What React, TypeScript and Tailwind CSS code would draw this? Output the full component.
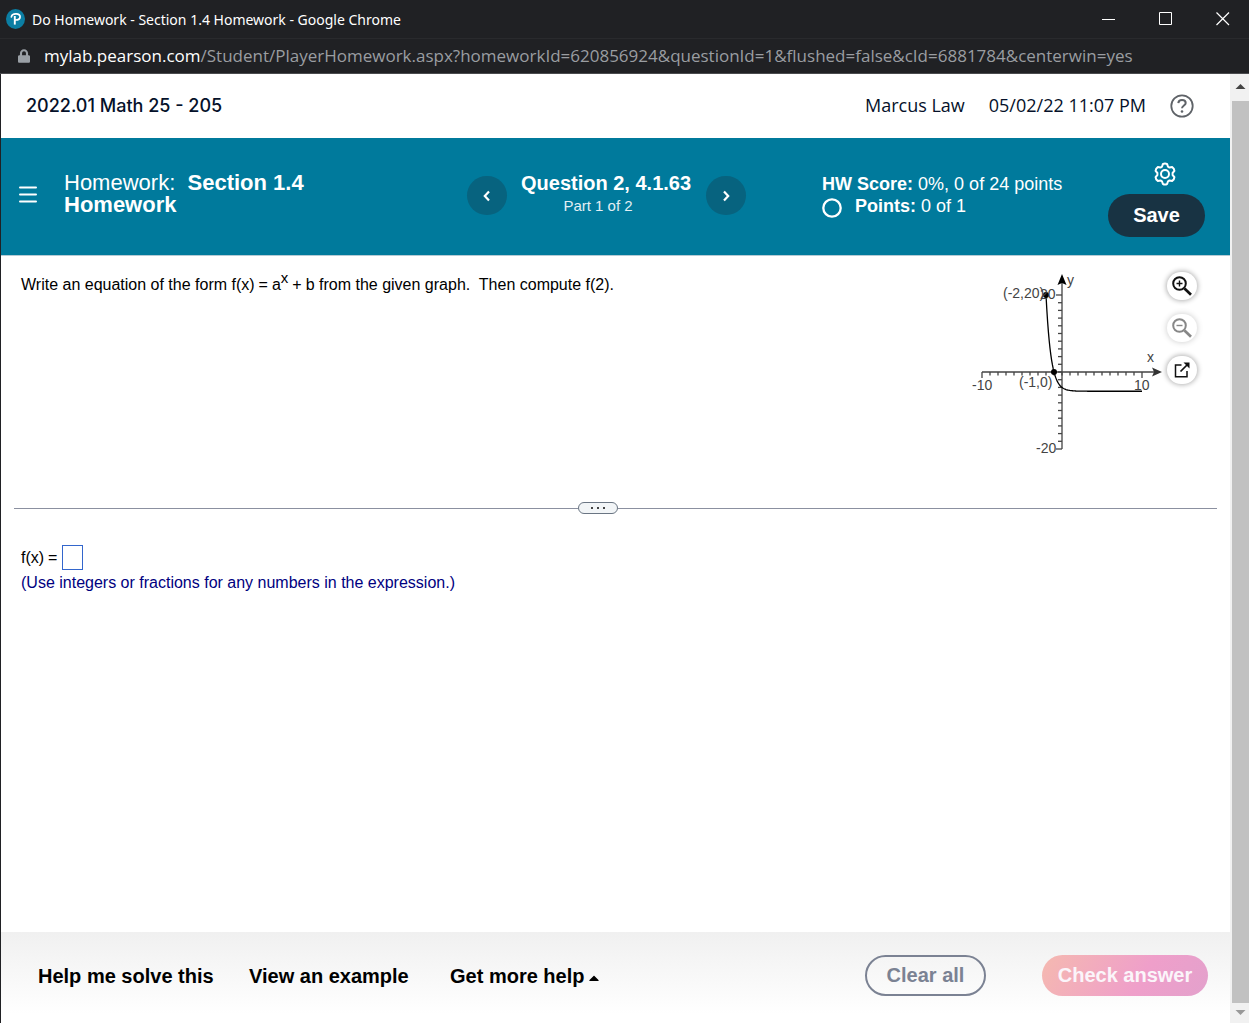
import { FaCaretUp, FaLock } from "react-icons/fa"

const TitleBar = () => {
  return (
    <header className="bg-[#202124] border-b border-[#4a4b4e]">
      <div className="h-[38px] flex items-center justify-between pl-[6px] pr-[19px]">
        <div className="flex items-center gap-[7px]">
          <svg className="w-[19px] h-[20px]" viewBox="0 0 19 20" aria-hidden="true">
            <ellipse cx="9.5" cy="10" rx="9.5" ry="10" fill="#0b7ea3" />
            <path d="M5.400 7.800C5.800 5.700 7.900 4.700 10.200 4.800c2.500.1 4 1.300 3.900 3.100-.1 1.900-1.900 3.100-4.600 3.100" fill="none" stroke="#fff" strokeWidth="1.700" strokeLinecap="round" />
            <path d="M8.800 7v8.600" stroke="#fff" strokeWidth="1.900" />
          </svg>
          <h1 className="font-['Noto_Sans',sans-serif] text-[14px] text-white whitespace-nowrap">Do Homework - Section 1.4 Homework - Google Chrome</h1>
        </div>
        <div className="flex items-center gap-[43px]">
          <button aria-label="Minimize">
            <svg className="w-[14px] h-[14px]" viewBox="0 0 14 14" stroke="#fff" fill="none"><path d="M0 7.500h13" /></svg>
          </button>
          <button aria-label="Maximize">
            <svg className="w-[14px] h-[14px]" viewBox="0 0 14 14" stroke="#fff" fill="none"><path d="M.5.5h12v12H.5z" /></svg>
          </button>
          <button aria-label="Close">
            <svg className="w-[14px] h-[14px]" viewBox="0 0 14 14" stroke="#fff" fill="none" strokeWidth="1.200"><path d="M.5.5l12.500 12.500M13 .5.5 13" /></svg>
          </button>
        </div>
      </div>
      <div className="h-[35px] flex items-center gap-[14px] pl-[18px] border-t border-[#292a2d]">
        <FaLock className="w-3 h-[14px] text-[#9aa0a6]" />
        <p className="font-['Open_Sans',sans-serif] text-[17px] text-[#9a9da1] whitespace-nowrap">
          <span className="text-white">mylab.pearson.com</span>/Student/PlayerHomework.aspx?homeworkId=620856924&amp;questionId=1&amp;flushed=false&amp;cId=6881784&amp;centerwin=yes
        </p>
      </div>
    </header>
  )
}

const CourseBar = () => {
  return (
    <div className="h-16 flex items-center justify-between pl-[25px] pr-9 text-[18px] text-[#05112a]">
      <h2 className="pb-[2px] font-[Inter,sans-serif] font-medium">2022.01 Math 25 - 205</h2>
      <div className="flex items-center gap-6 pb-px font-['Open_Sans',sans-serif]">
        <span>Marcus Law</span>
        <span>05/02/22 11:07 PM</span>
        <button aria-label="Help">
          <svg className="w-6 h-6" viewBox="0 0 24 24" fill="none" stroke="#5f6368" strokeWidth="1.800">
            <circle cx="12" cy="12" r="10.700" />
            <path d="M8.300 9.200C8.500 7 10 5.900 12 5.900s3.700 1.200 3.700 3.100c0 2.500-3.500 2.600-3.700 5.300" strokeWidth="2" />
            <circle cx="12" cy="17.500" r="1.300" fill="#5f6368" stroke="none" />
          </svg>
        </button>
      </div>
    </div>
  )
}

const HomeworkBar = () => {
  return (
    <div className="h-[118px] flex bg-[#007a9c] border-b border-[#b5cbd5] text-white">
      <div className="w-[466px] shrink-0 flex items-start pl-[17px]">
        <button aria-label="Menu" className="mt-12">
          <svg className="w-5 h-[18px]" viewBox="0 0 20 18" stroke="#fff" strokeWidth="2" strokeLinecap="round"><path d="M2 1.500h16M2 8.500h16M2 15.500h16" /></svg>
        </button>
        <h2 className="mt-[34px] ml-[26px] w-[270px] text-[22px] leading-[22px]">
          Homework:&nbsp; <b>Section 1.4 Homework</b>
        </h2>
      </div>
      <div className="flex items-start">
        <button aria-label="Previous question" className="mt-[38px] w-10 h-[39px] rounded-full bg-[#07637f] flex items-center justify-center">
          <svg className="w-[10px] h-3" viewBox="0 0 10 12" fill="none" stroke="#fff" strokeWidth="2.200"><path d="M7 1.500 2.800 6 7 10.500" /></svg>
        </button>
        <div className="mt-[34px] ml-[14px] mr-[15px] whitespace-nowrap">
          <h3 className="text-[20px] leading-[22px] font-bold">Question 2, 4.1.63</h3>
          <p className="pr-4 text-[15px] leading-[24px] text-center text-[#e3eff4]">Part 1 of 2</p>
        </div>
        <button aria-label="Next question" className="mt-[38px] w-10 h-[39px] rounded-full bg-[#07637f] flex items-center justify-center">
          <svg className="w-[10px] h-3" viewBox="0 0 10 12" fill="none" stroke="#fff" strokeWidth="2.200"><path d="M3 1.500 7.200 6 3 10.500" /></svg>
        </button>
      </div>
      <div className="mt-[35px] ml-[76px] text-[18px] leading-[22px] whitespace-nowrap">
        <p><b>HW Score:</b> 0%, 0 of 24 points</p>
        <p className="flex gap-[13px]">
          <svg className="w-5 h-5 mt-[3px]" viewBox="0 0 20 20" fill="none" stroke="#fff" strokeWidth="2.300"><circle cx="10" cy="10" r="8.700" /></svg>
          <span><b>Points:</b> 0 of 1</span>
        </p>
      </div>
      <div className="ml-auto mr-[25px] mt-6 flex flex-col items-center">
        <button aria-label="Settings" className="ml-4">
          <svg className="w-6 h-6" viewBox="0 0 24 24" fill="none" stroke="#fff" strokeWidth="2" strokeLinejoin="round">
            <path d="M9.800 2.200Q12 .8 14.200 2.200L15 4.700l1.500.9 2.700-.5Q21.300 6.500 21.400 8.900L19.600 11v2l1.800 2.100q-.1 2.400-2.200 3.800l-2.700-.5-1.500.9-.8 2.500q-2.200 1.400-4.400 0L9 19.300l-1.500-.9-2.700.5Q2.700 17.500 2.600 15.100L4.400 13v-2L2.600 8.900Q2.700 6.500 4.800 5.100l2.700.5L9 4.700z" />
            <circle cx="12" cy="12" r="4" />
          </svg>
        </button>
        <button className="mt-2 w-[97px] h-[43px] pb-[2px] rounded-full bg-[#183343] text-[20px] font-bold">Save</button>
      </div>
    </div>
  )
}

// origin and scale of the plot, in svg units
const ORIGIN = { x: 90, y: 102 }
const UNIT_X = 8
const UNIT_Y = 3.85

const toX = (x: number) => ORIGIN.x + x * UNIT_X
const toY = (y: number) => ORIGIN.y - y * UNIT_Y

const curve = Array.from({ length: 121 }, (_, i) => {
  const x = -2 + i * 0.1
  return `${toX(x).toFixed(2)},${toY(Math.pow(0.2, x) - 5).toFixed(2)}`
}).join(" ")

const ticks = Array.from({ length: 21 }, (_, i) => i - 10)

const Graph = () => {
  return (
    <svg className="w-[195px] h-[190px] shrink-0" viewBox="0 0 195 190" role="img" aria-label="Graph of f">
      <g stroke="#444" strokeWidth="1.300" fill="none">
        <path d="M10 102H182M90 12V179" />
        {ticks.map((t) => (
          <path key={`x${t}`} d={`M${toX(t)} 102v${Math.abs(t) === 10 ? 6 : 3.5}`} />
        ))}
        {ticks.map((t) => (
          <path key={`y${t}`} d={`M90 ${toY(t * 2)}h${Math.abs(t) === 10 ? -6 : -4}`} />
        ))}
      </g>
      <path d="M90 4l4.500 11-4.500-2-4.500 2z" fill="#000" />
      <path d="M190 102l-10 4.500 2-4.500-2-4.500z" fill="#333" />
      <polyline points={curve} fill="none" stroke="#000" strokeWidth="1.300" />
      <circle cx={toX(-2)} cy={toY(20)} r="3" />
      <circle cx={toX(-1)} cy={toY(0)} r="3" />
      <g fill="#444" fontSize="14">
        <text x="31" y="28">(-2,20)</text>
        <text x="68" y="29">20</text>
        <text x="47" y="117">(-1,0)</text>
        <text x="0" y="120">-10</text>
        <text x="162" y="120">10</text>
        <text x="64" y="183">-20</text>
        <text x="95" y="15">y</text>
        <text x="175" y="92">x</text>
      </g>
    </svg>
  )
}

const GraphTools = () => {
  const button = "w-[30px] h-7 rounded-full bg-white shadow-[0_0_5px_1px_rgba(0,0,0,0.3)] flex items-center justify-center"
  return (
    <div className="flex flex-col gap-[14px]">
      <button aria-label="Zoom in" className={button}>
        <svg className="w-5 h-5" viewBox="0 0 20 20" fill="none" stroke="#111">
          <circle cx="7.500" cy="7.500" r="6.300" strokeWidth="2" />
          <path d="M4.500 7.500h6M7.500 4.500v6" strokeWidth="1.400" />
          <path d="M12.500 12.500l6.500 6.300" strokeWidth="2.700" />
        </svg>
      </button>
      <button aria-label="Zoom out" className={`${button} opacity-50`}>
        <svg className="w-5 h-5" viewBox="0 0 20 20" fill="none" stroke="#111">
          <circle cx="7.500" cy="7.500" r="6.300" strokeWidth="2" />
          <path d="M4.500 7.500h6" strokeWidth="1.400" />
          <path d="M12.500 12.500l6.500 6.300" strokeWidth="2.700" />
        </svg>
      </button>
      <button aria-label="Open in new window" className={button}>
        <svg className="w-4 h-4" viewBox="0 0 16 16" fill="none" stroke="#111" strokeWidth="1.500">
          <path d="M7.500 3H1.500v11.800h11.500V9" />
          <path d="M6.500 9.500l7-7" strokeWidth="1.700" />
          <path d="M9.500.5H15.500V6.500z" fill="#111" stroke="none" />
        </svg>
      </button>
    </div>
  )
}

const Question = () => {
  return (
    <section className="h-[246px] flex items-start pl-5 pr-[33px]">
      <p className="mt-[17px] flex-1 text-[16px] leading-6">
        Write an equation of the form f(x)<span className="mx-1">=</span>a
        <sup className="text-[15px] leading-none">x</sup><span className="mx-1">+</span>b from the given graph.&nbsp; Then compute f(2).
      </p>
      <div className="mt-[14px] flex items-start">
        <Graph />
        <div className="mt-[2px]">
          <GraphTools />
        </div>
      </div>
    </section>
  )
}

const Divider = () => {
  return (
    <div className="mx-[13px] flex items-center">
      <div className="w-[564px] h-px bg-[#8b90a0]" />
      <button aria-label="Resize panels" className="w-10 h-3 rounded-full border border-[#6a7583] bg-[#f2f5f7] flex items-center justify-center gap-1">
        <i className="w-[2px] h-[2px] bg-[#444]" />
        <i className="w-[2px] h-[2px] bg-[#444]" />
        <i className="w-[2px] h-[2px] bg-[#444]" />
      </button>
      <div className="flex-1 h-px bg-[#8b90a0]" />
    </div>
  )
}

const Answer = () => {
  return (
    <section className="flex-1 pl-5 pt-[31px] text-[16px]">
      <div className="flex items-center">
        <label htmlFor="answer" className="pt-px">f(x)<span className="ml-1">=</span></label>
        <input id="answer" className="ml-[5px] w-[21px] h-[25px] border border-solid border-[#3366cc] text-center" />
      </div>
      <p className="pt-px leading-6 text-[#000080]">(Use integers or fractions for any numbers in the expression.)</p>
    </section>
  )
}

const Footer = () => {
  return (
    <footer className="h-[91px] flex items-start justify-between pt-[23px] pl-[37px] pr-[22px] bg-linear-to-b from-[#f0f0f0] to-white to-90% text-[20px] font-bold whitespace-nowrap">
      <div className="h-[41px] flex items-center">
        <button className="w-[211px] text-left">Help me solve this</button>
        <button className="w-[201px] text-left">View an example</button>
        <button className="flex items-center gap-[5px]">
          Get more help <FaCaretUp className="w-[10px] h-4 mt-1" />
        </button>
      </div>
      <div className="flex gap-14">
        <button className="w-[121px] h-[41px] pb-[2px] rounded-full border-2 border-[#7b8293] text-[#7b8293]">Clear all</button>
        <button className="w-[166px] h-[41px] pb-[2px] rounded-full text-[#fbf5fa] bg-linear-[120deg,#f5b9b0,#ef9fca_60%,#e3a1cc]">Check answer</button>
      </div>
    </footer>
  )
}

const ScrollBar = () => {
  return (
    <div className="w-[19px] shrink-0 flex flex-col bg-[#f1f1f1]" aria-hidden="true">
      <svg className="w-[19px] h-[27px]" viewBox="0 0 19 27"><path d="M5.500 15h10l-5-5z" fill="#444" /></svg>
      <div className="ml-[2px] flex-1 bg-[#c1c1c1]" />
      <svg className="w-[19px] h-5" viewBox="0 0 19 20"><path d="M5.500 7h10l-5 5z" fill="#999" /></svg>
    </div>
  )
}

const App = () => {
  return (
    <div className="min-h-screen flex flex-col bg-white text-black font-['Liberation_Sans',Arial,sans-serif]">
      <TitleBar />
      <div className="flex-1 flex border-l border-[#202124]">
        <main className="flex-1 min-w-0 flex flex-col">
          <CourseBar />
          <HomeworkBar />
          <div className="flex-1 flex flex-col">
            <Question />
            <Divider />
            <Answer />
          </div>
          <Footer />
        </main>
        <ScrollBar />
      </div>
    </div>
  )
}

export default App;
